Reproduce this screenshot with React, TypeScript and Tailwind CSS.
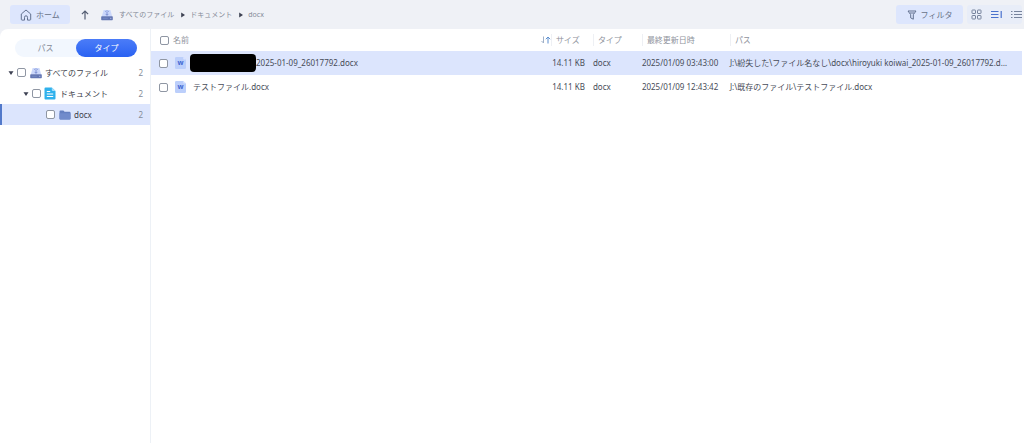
import { clsx } from "clsx";

type IconProps = { className?: string };

const files = [
  {
    name: "2025-01-09_26017792.docx",
    hidden: true,
    size: "14.11 KB",
    type: "docx",
    date: "2025/01/09 03:43:00",
    path: "J:\\紛失した\\ファイル名なし\\docx\\hiroyuki koiwai_2025-01-09_26017792.docx",
  },
  {
    name: "テストファイル.docx",
    hidden: false,
    size: "14.11 KB",
    type: "docx",
    date: "2025/01/09 12:43:42",
    path: "J:\\既存のファイル\\テストファイル.docx",
  },
];

function HomeIcon() {
  return (
    <svg viewBox="0 0 12 12" className="size-3" fill="none" stroke="#62718f" strokeLinejoin="round">
      <path d="M1.3 5 6 1l4.700 4v5.300a.8.8 0 0 1-.8.8H7.500V8.300a1.500 1.500 0 0 0-3 0v2.800H2.100a.8.8 0 0 1-.8-.8Z" />
    </svg>
  );
}

function DriveIcon({ className }: IconProps) {
  return (
    <svg viewBox="0 0 12 12" className={clsx("h-3 w-3 shrink-0", className)}>
      <path d="M2.600 1h6.800l1.800 6.500H.8Z" fill="#ccd8fb" />
      <path d="M4 2.600Q6 1 8 2.600" fill="none" stroke="#7d92d2" strokeWidth=".7" />
      <path d="M6 3v3.300M4.600 4.900 6 6.300l1.400-1.400" fill="none" stroke="#6f84cb" strokeWidth=".8" />
      <rect x=".2" y="7.300" width="11.600" height="4" rx=".7" fill="#6477b4" />
      <path d="M1.800 9.300h5" stroke="#8295cf" strokeWidth=".6" />
      <circle cx="9.800" cy="9.300" r=".5" fill="#d8e2ff" />
    </svg>
  );
}

function DocIcon() {
  return (
    <svg viewBox="0 0 12 13" className="h-[13px] w-3 shrink-0">
      <path d="M1.500.5h6.300l3.700 3.600v7.400a1 1 0 0 1-1 1h-9a1 1 0 0 1-1-1v-10a1 1 0 0 1 1-1Z" fill="#2fb1ec" />
      <path d="M7.800.5v2.600a1 1 0 0 0 1 1h2.700Z" fill="#a5e0fb" />
      <path d="M2.800 4.500h3.400M2.800 7h6.400M2.800 9.500h6.400" stroke="#fff" strokeWidth="1.100" />
    </svg>
  );
}

function FolderIcon() {
  return (
    <svg viewBox="0 0 12 10" className="h-[10px] w-3 shrink-0">
      <path d="M.5 1.400a.9.9 0 0 1 .9-.9h3l1.200 1.300h5a.9.9 0 0 1 .9.9v5.900a.9.9 0 0 1-.9.9H1.400a.9.9 0 0 1-.9-.9Z" fill="#6580c1" />
      <path d="M.5 3.200h11v5.400a.9.9 0 0 1-.9.9H1.400a.9.9 0 0 1-.9-.9Z" fill="#718bcb" />
    </svg>
  );
}

function WordIcon() {
  return (
    <svg viewBox="0 0 11 12" className="h-3 w-[11px] shrink-0">
      <path d="M1.300 0h7L11 2.500v8.200a1.300 1.300 0 0 1-1.300 1.300H1.300A1.300 1.300 0 0 1 0 10.700V1.300A1.300 1.300 0 0 1 1.300 0Z" fill="#bccffb" />
      <path d="M8.300 0v1.700a.8.8 0 0 0 .8.8H11Z" fill="#dfe8ff" />
      <text x="5.500" y="8.300" textAnchor="middle" fontSize="7" fontWeight="700" fill="#3f66d2">
        w
      </text>
    </svg>
  );
}

function Caret({ className }: IconProps) {
  return (
    <svg viewBox="0 0 6 6" className={clsx("size-[6px] shrink-0", className)} fill="#3d4152">
      <path d="M1.200.500 5 3 1.200 5.500Z" />
    </svg>
  );
}

function Check({ label }: { label: string }) {
  return (
    <input
      type="checkbox"
      aria-label={label}
      className="size-[9px] shrink-0 appearance-none rounded-[2px] border border-[#8f96a3] bg-white checked:bg-[#3a6df5]"
    />
  );
}

function Toolbar() {
  return (
    <header className="flex h-[29px] items-center pl-[10px] pr-[2px] text-[#697388]">
      <button className="flex h-[19px] w-[60px] items-center justify-center gap-1 rounded-[3px] bg-[#dde6fd]">
        <HomeIcon />
        ホーム
      </button>
      <button aria-label="上へ" className="ml-[10px] mr-[11px]">
        <svg viewBox="0 0 10 10" className="size-[10px]" fill="none" stroke="#535d72" strokeWidth="1.200">
          <path d="M5 9.500V1M1.900 4.100 5 1l3.100 3.100" />
        </svg>
      </button>
      <nav className="flex items-center text-[7px] text-[#858b98]">
        <DriveIcon className="mr-[6px]" />
        <a href="#all">すべてのファイル</a>
        <Caret className="ml-[6px] mr-1" />
        <a href="#documents">ドキュメント</a>
        <Caret className="ml-[6px] mr-1" />
        <a href="#docx">docx</a>
      </nav>
      <button className="ml-auto flex h-[19px] w-[67px] items-center justify-center gap-1 rounded-[3px] bg-[#dde6fd]">
        <svg viewBox="0 0 10 10" className="size-[10px]" fill="none" stroke="#62718f" strokeLinejoin="round">
          <path d="M1 1h8L6.300 4.700v4.500L3.700 7.900V4.700ZM3 3h4" />
        </svg>
        フィルタ
      </button>
      <div className="ml-1 flex h-[19px] items-center gap-[9px] rounded-[3px] bg-[#e8edf8] pl-1">
        <button aria-label="グリッド表示">
          <svg viewBox="0 0 11 11" className="size-[11px]" fill="none" stroke="#76839c">
            <rect x="1" y="1" width="3.500" height="3.500" rx=".5" />
            <rect x="6.500" y="1" width="3.500" height="3.500" rx=".5" />
            <rect x="1" y="6.500" width="3.500" height="3.500" rx=".5" />
            <rect x="6.500" y="6.500" width="3.500" height="3.500" rx=".5" />
          </svg>
        </button>
        <button aria-label="詳細表示">
          <svg viewBox="0 0 11 9" className="h-[9px] w-[11px]" fill="none" stroke="#4a72cd" strokeWidth="1.200">
            <path d="M0 1.500h7.500M0 4.500h7.500M0 7.500h7.500M10.200 1v7" />
          </svg>
        </button>
        <button aria-label="リスト表示">
          <svg viewBox="0 0 11 9" className="h-[9px] w-[11px]" fill="none" stroke="#76839c">
            <path d="M0 1.500h1.500M3 1.500h8M0 4.500h1.500M3 4.500h8M0 7.500h1.500M3 7.500h8" />
          </svg>
        </button>
      </div>
    </header>
  );
}

function Sidebar() {
  return (
    <aside className="w-[151px] shrink-0 border-r border-[#edf1f6] pt-[10px]">
      <div className="ml-[15px] mr-[13px] flex h-[18px] rounded-full bg-[#f2f7fe]">
        <button className="flex-1 text-[#858b98]">パス</button>
        <button className="flex-1 rounded-full bg-linear-to-b from-[#4b7cf8] to-[#2a62f2] text-white">タイプ</button>
      </div>
      <ul className="mt-[5px] text-[#3c404a]">
        <li className="flex h-[21px] items-center pl-2 pr-[7px]">
          <Caret className="mr-[3px] rotate-90" />
          <Check label="すべてのファイル" />
          <DriveIcon className="ml-1 mr-[3px]" />
          すべてのファイル
          <span className="ml-auto text-[#858b98]">2</span>
        </li>
        <li className="flex h-[21px] items-center pl-[23px] pr-[7px]">
          <Caret className="mr-[3px] rotate-90" />
          <Check label="ドキュメント" />
          <span className="ml-[3px] mr-1">
            <DocIcon />
          </span>
          ドキュメント
          <span className="ml-auto text-[#858b98]">2</span>
        </li>
        <li className="flex h-[21px] items-center border-l-2 border-[#5279ca] bg-[#dce5fd] pl-11 pr-[7px]">
          <Check label="docx" />
          <span className="ml-1 mr-[3px]">
            <FolderIcon />
          </span>
          docx
          <span className="ml-auto text-[#858b98]">2</span>
        </li>
      </ul>
    </aside>
  );
}

function FileTable() {
  return (
    <main className="min-w-0 flex-1 pr-[2px]">
      <table className="w-full table-fixed text-left text-[#474c58]">
        <thead>
          <tr className="h-[22px] text-[#8f939c]">
            <th className="font-normal">
              <div className="flex items-center pl-[9px]">
                <Check label="すべて選択" />
                <span className="ml-1">名前</span>
                <svg viewBox="0 0 10 8" className="ml-auto h-2 w-[10px]" fill="none">
                  <path d="M2.500.500v6.500M.500 5l2 2" stroke="#9fb0c8" />
                  <path d="M7 7.500V1M4.800 3.200 7 1l2.200 2.200" stroke="#5c8fd0" />
                </svg>
              </div>
            </th>
            <th className="w-[38px] font-normal">
              <div className="border-l border-[#eef0f4] pl-1">サイズ</div>
            </th>
            <th className="w-[49px] pl-1 font-normal">
              <div className="border-l border-[#eef0f4] pl-1">タイプ</div>
            </th>
            <th className="w-[88px] pl-1 font-normal">
              <div className="border-l border-[#eef0f4] pl-1">最終更新日時</div>
            </th>
            <th className="w-[34%] pl-1 font-normal">
              <div className="border-l border-[#eef0f4] pl-1">パス</div>
            </th>
          </tr>
        </thead>
        <tbody>
          {files.map((file, i) => (
            <tr key={file.date} className={clsx("h-6", i === 0 && "bg-[#dce5fd]")}>
              <td>
                <div className="flex items-center pl-2">
                  <Check label={file.name} />
                  <span className="ml-[7px]">
                    <WordIcon />
                  </span>
                  {file.hidden ? (
                    <span className="ml-1 h-[18px] w-[66px] rounded-[4px] bg-black" />
                  ) : (
                    <span className="w-[7px]" />
                  )}
                  {file.name}
                </div>
              </td>
              <td className="whitespace-nowrap pr-1 text-right">{file.size}</td>
              <td className="pl-1">{file.type}</td>
              <td className="whitespace-nowrap pl-1">{file.date}</td>
              <td className="truncate pl-1 pr-[13px]">{file.path}</td>
            </tr>
          ))}
        </tbody>
      </table>
    </main>
  );
}

export default function App() {
  return (
    <div className="flex min-h-screen flex-col bg-[#eff1f6] font-['Noto_Sans','Noto_Sans_CJK_JP',sans-serif] text-[8px] leading-3">
      <Toolbar />
      <div className="flex flex-1 rounded-tl-lg bg-white">
        <Sidebar />
        <FileTable />
      </div>
    </div>
  );
}
